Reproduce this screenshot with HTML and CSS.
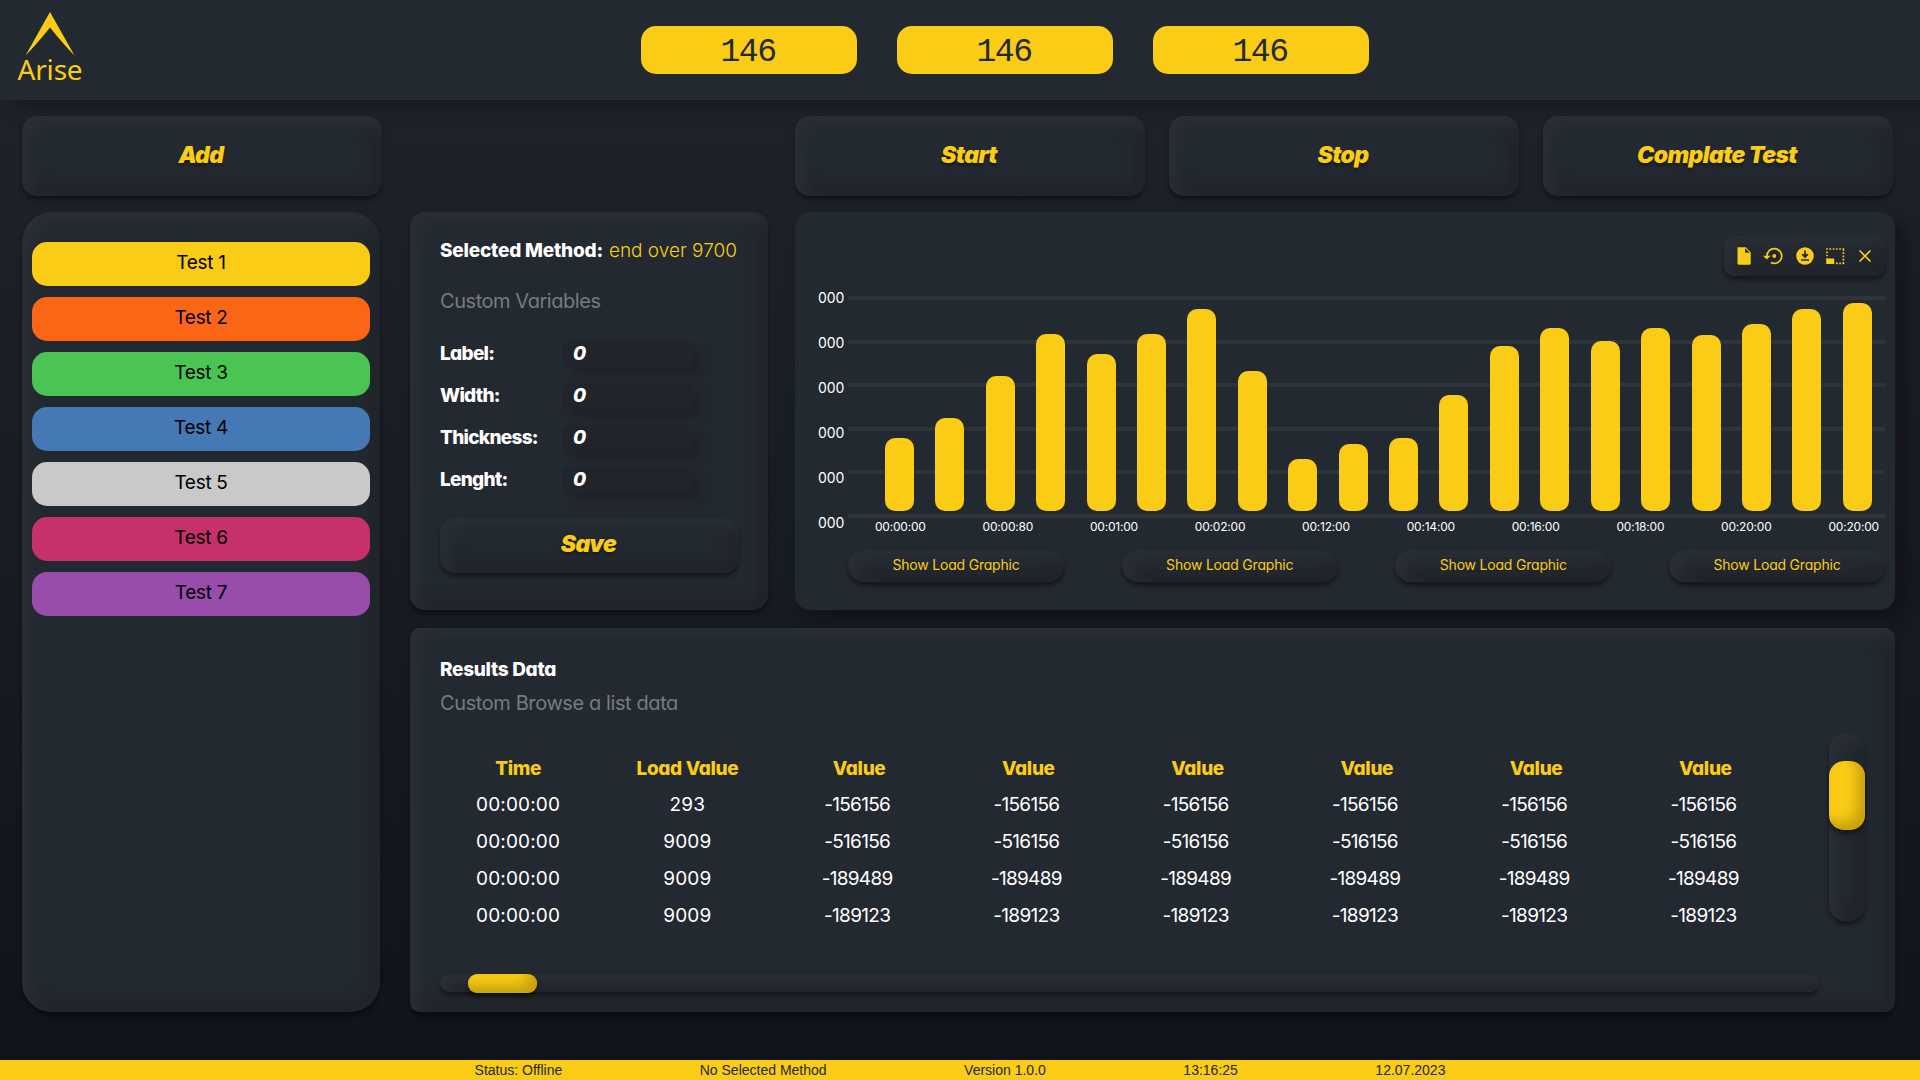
FILE: index.html
```
<!DOCTYPE html>
<html lang="en">
<head>
  <meta charset="UTF-8" />
  <meta name="viewport" content="width=device-width, initial-scale=1.0"/>
  <title>Arise</title>
  <link rel="stylesheet" href="styles.css">
</head>
<body>
  <header>
    <div class="logo">
      <svg width="50" height="44" viewBox="0 0 50 44"><path d="M25 0 L49.500 43.500 Q39 33 25 15.500 Q11 33 .5 43.500 Z" fill="#facc15"/></svg>
      <span>Arise</span>
    </div>
    <div class="counters">
      <div class="counter">146</div>
      <div class="counter">146</div>
      <div class="counter">146</div>
    </div>
  </header>

  <main>
    <button class="btn add">Add</button>
    <div class="controls">
      <button class="btn">Start</button>
      <button class="btn">Stop</button>
      <button class="btn">Complate Test</button>
    </div>

    <aside class="panel sidebar">
      <div class="test yellow">Test 1</div>
      <div class="test orange">Test 2</div>
      <div class="test green">Test 3</div>
      <div class="test blue">Test 4</div>
      <div class="test gray">Test 5</div>
      <div class="test pink">Test 6</div>
      <div class="test purple">Test 7</div>
    </aside>

    <section class="panel method">
      <div class="method-title"><b>Selected Method:</b><span>end over 9700</span></div>
      <div class="method-sub">Custom Variables</div>
      <div class="fields">
        <div class="field"><label>Label:</label><div class="field-value">0</div></div>
        <div class="field"><label>Width:</label><div class="field-value">0</div></div>
        <div class="field"><label>Thickness:</label><div class="field-value">0</div></div>
        <div class="field"><label>Lenght:</label><div class="field-value">0</div></div>
      </div>
      <button class="btn save">Save</button>
    </section>

    <section class="chart-card">
      <div class="toolbar">
        <svg width="24" height="24" viewBox="0 0 24 24"><path d="M5.500 3.300h8.200l5 5v10.900q0 1.600-1.600 1.600H7.100q-1.600 0-1.600-1.600z" fill="#facc15"/><path d="M13.200 4.300v4.500h4.500" fill="#20242a"/></svg>
        <svg width="24" height="24" viewBox="0 0 24 24"><path d="M4.900 12.500a7.400 7.400 0 1 1 4 6.100" fill="none" stroke="#facc15" stroke-width="1.700"/><path d="M1 11.800h7.600l-3.800 3.800z" fill="#facc15"/><circle cx="12.300" cy="12" r="1.900" fill="#facc15"/></svg>
        <svg width="24" height="24" viewBox="0 0 24 24"><circle cx="12" cy="12" r="8.800" fill="#facc15"/><path d="M12 6.500v6M9.200 10.200l2.800 2.800 2.800-2.800M8 16h8" fill="none" stroke="#20242a" stroke-width="1.700"/></svg>
        <svg width="24" height="24" viewBox="0 0 24 24"><path d="M3.200 5h18M20.400 5v14.500M4 7.400v7M13 19.300h8.200" fill="none" stroke="#facc15" stroke-width="1.700" stroke-dasharray="1.700 1.550"/><path d="M3.200 14.500h8v5.500h-8z" fill="#facc15"/></svg>
        <svg width="24" height="24" viewBox="0 0 24 24"><path d="M6.500 6.500l11 11M17.500 6.500l-11 11" fill="none" stroke="#facc15" stroke-width="1.700"/></svg>
      </div>
      <div class="chart">
        <div class="y-labels">
          <span>000</span><span>000</span><span>000</span><span>000</span><span>000</span><span>000</span>
        </div>
        <div class="plot">
          <div class="grid-lines"><i></i><i></i><i></i><i></i><i></i><i></i></div>
          <div class="bars" id="bars"></div>
        </div>
      </div>
      <div class="x-labels">
        <span>00:00:00</span><span>00:00:80</span><span>00:01:00</span><span>00:02:00</span><span>00:12:00</span>
        <span>00:14:00</span><span>00:16:00</span><span>00:18:00</span><span>00:20:00</span><span>00:20:00</span>
      </div>
      <div class="chart-buttons">
        <button class="graphic-btn">Show Load Graphic</button>
        <button class="graphic-btn">Show Load Graphic</button>
        <button class="graphic-btn">Show Load Graphic</button>
        <button class="graphic-btn">Show Load Graphic</button>
      </div>
    </section>

    <section class="panel results">
      <h2>Results Data</h2>
      <p>Custom Browse a list data</p>
      <div class="results-body">
        <table>
          <thead id="resultsHead"></thead>
          <tbody id="resultsBody"></tbody>
        </table>
        <div class="track-y"><div class="thumb-y"></div></div>
      </div>
      <div class="track-x"><div class="thumb-x"></div></div>
    </section>
  </main>

  <footer>
    <span>Status: Offline</span>
    <span>No Selected Method</span>
    <span>Version 1.0.0</span>
    <span>13:16:25</span>
    <span>12.07.2023</span>
  </footer>

  <script>
    const barHeights = [73, 93, 135, 177, 157, 177, 202, 140, 52, 67, 73, 116, 165, 183, 170, 183, 176, 187, 202, 208];

    const rows = [
      ["00:00:00", "293", "-156156"],
      ["00:00:00", "9009", "-516156"],
      ["00:00:00", "9009", "-189489"],
      ["00:00:00", "9009", "-189123"]
    ];

    function loadBars() {
      const bars = document.getElementById("bars");
      barHeights.forEach(h => {
        const bar = document.createElement("div");
        bar.className = "bar";
        bar.style.height = h + "px";
        bars.appendChild(bar);
      });
    }

    function loadResults() {
      const valueCols = 6;
      document.getElementById("resultsHead").innerHTML =
        "<tr><th>Time</th><th>Load Value</th>" + "<th class='value'>Value</th>".repeat(valueCols) + "</tr>";
      document.getElementById("resultsBody").innerHTML = rows.map(r =>
        `<tr><td>${r[0]}</td><td>${r[1]}</td>` + `<td class="value">${r[2]}</td>`.repeat(valueCols) + "</tr>"
      ).join("");
    }

    loadBars();
    loadResults();
  </script>
</body>
</html>
```
FILE: styles.css
```
:root {
  --yellow: #facc15;
  --card: #232930;
  --raised: 0 4px 4px rgba(0, 0, 0, 0.4), inset 8px 8px 16px rgba(48, 51, 60, 0.65), inset -8px -8px 16px rgba(31, 34, 38, 0.7);
}

* {
  box-sizing: border-box;
}

body {
  margin: 0;
  width: 1920px;
  height: 1080px;
  overflow: hidden;
  display: flex;
  flex-direction: column;
  font-family: Inter, sans-serif;
  font-feature-settings: "cv11";
  background: linear-gradient(#20242a, #0f131b);
  color: #fff;
}

button {
  border: none;
  font-family: inherit;
  font-feature-settings: inherit;
  cursor: pointer;
}

header {
  height: 100px;
  flex-shrink: 0;
  display: grid;
  grid-template-columns: 641px auto;
  background: var(--card);
  box-shadow: 15px 6px 14px rgba(20, 23, 26, 0.85);
}

.logo {
  width: 100px;
  display: flex;
  flex-direction: column;
  align-items: center;
  padding-top: 12px;
}

.logo span {
  margin-top: -1px;
  font-family: "Noto Sans", sans-serif;
  font-size: 28px;
  line-height: 28px;
  letter-spacing: -0.2px;
  color: var(--yellow);
}

.counters {
  display: flex;
  gap: 40px;
  padding-top: 26px;
}

.counter {
  width: 216px;
  height: 48px;
  border-radius: 15px;
  background: var(--yellow);
  color: #232930;
  font: 33px/53px "Liberation Mono", monospace;
  letter-spacing: -1.4px;
  padding-right: 2px;
  text-align: center;
}

main {
  flex: 1;
  display: grid;
  grid-template-columns: 358px 358px 1100px;
  grid-template-rows: 80px 398px 386px;
  row-gap: 16px;
  padding: 16px 22px;
}

.btn {
  height: 80px;
  padding: 0 2px 3px 0;
  border-radius: 15px;
  background: var(--card);
  box-shadow: var(--raised);
  color: var(--yellow);
  font-size: 23px;
  font-weight: 900;
  font-style: italic;
  letter-spacing: -0.6px;
  text-shadow: 0 3px 3px rgba(0, 0, 0, 0.3);
}

.add {
  width: 360px;
}

.controls {
  grid-column: 3;
  margin-left: 57px;
  width: 1098px;
  display: flex;
  gap: 24px;
}

.controls .btn {
  flex: 1;
}

.panel {
  background: var(--card);
  border-radius: 15px;
  box-shadow: var(--raised);
}

.sidebar {
  grid-column: 1;
  grid-row: 2 / 4;
  border-radius: 30px;
  padding: 30px 10px;
  display: flex;
  flex-direction: column;
  gap: 11px;
}

.test {
  height: 44px;
  border-radius: 15px;
  color: #000;
  font-size: 19px;
  line-height: 41px;
  letter-spacing: -0.3px;
  text-align: center;
}

.yellow { background: #facc15; }
.orange { background: #fa6615; }
.green { background: #4ac553; }
.blue { background: #4479b6; }
.gray { background: #c9c9c9; }
.pink { background: #c7306d; }
.purple { background: #984cab; }

.method {
  margin-left: 30px;
  width: 358px;
  padding: 27px 29px 0 30px;
  display: flex;
  flex-direction: column;
}

.method-title {
  display: flex;
  justify-content: space-between;
  line-height: 24px;
  font-size: 19px;
  padding-right: 2px;
  white-space: nowrap;
}

.method-title b {
  font-weight: 800;
  letter-spacing: -0.2px;
}

.method-title span {
  color: var(--yellow);
  font-weight: 300;
}

.method-sub {
  margin-top: 26px;
  color: #777b80;
  font-size: 20px;
  line-height: 24px;
  letter-spacing: -0.45px;
}

.fields {
  margin-top: 29px;
  display: grid;
  gap: 17px;
}

.field {
  display: grid;
  grid-template-columns: 123px 129px;
  height: 25px;
  font-size: 19px;
  font-weight: 800;
  line-height: 24px;
  letter-spacing: -0.7px;
}

.field-value {
  padding-left: 10px;
  border-radius: 4px;
  background: #21252b;
  box-shadow: 10px 8px 10px rgba(30, 33, 39, 0.85);
  font-style: italic;
}

.save {
  margin-top: 25px;
  height: 55px;
}

.chart-card {
  margin-left: 57px;
  width: 1100px;
  padding: 24px 10px 0 23px;
  border-radius: 15px;
  background: var(--card);
  box-shadow: 12px 10px 16px rgba(12, 15, 20, 0.55);
  display: flex;
  flex-direction: column;
}

.toolbar {
  align-self: flex-end;
  width: 161px;
  height: 40px;
  display: flex;
  align-items: center;
  justify-content: space-between;
  padding: 0 8px;
  border-radius: 10px;
  background: var(--card);
  box-shadow: var(--raised);
}

.chart {
  display: flex;
  gap: 4px;
  margin-top: 12px;
}

.y-labels {
  width: 26px;
  height: 245px;
  display: flex;
  flex-direction: column;
  justify-content: space-between;
  font-size: 14px;
  line-height: 20px;
  letter-spacing: -0.1px;
}

.plot {
  flex: 1;
  display: grid;
  height: 230px;
  padding-top: 8px;
}

.grid-lines,
.bars {
  grid-area: 1 / 1;
}

.grid-lines {
  height: 222px;
  display: flex;
  flex-direction: column;
  justify-content: space-between;
}

.grid-lines i {
  height: 4px;
  background: #2f343b;
}

.bars {
  height: 215px;
  display: flex;
  align-items: flex-end;
  justify-content: space-between;
  padding: 0 13px 0 37px;
}

.bar {
  width: 29px;
  border-radius: 10px;
  background: var(--yellow);
}

.x-labels {
  display: flex;
  justify-content: space-between;
  margin: -15px 6px 0 57px;
  font-size: 12px;
  line-height: 18px;
  letter-spacing: -0.2px;
}

.chart-buttons {
  display: flex;
  justify-content: space-between;
  margin: 14px 0 0 30px;
}

.graphic-btn {
  width: 216px;
  height: 32px;
  padding: 0 0 4px;
  border-radius: 16px;
  background: var(--card);
  box-shadow: var(--raised);
  color: var(--yellow);
  font-size: 14px;
  letter-spacing: -0.2px;
}

.results {
  grid-column: 2 / 4;
  margin: 2px 0 0 30px;
  width: 1485px;
  padding: 30px 30px 0;
  border-radius: 10px;
}

.results h2 {
  margin: 0;
  font-size: 19px;
  font-weight: 800;
  line-height: 24px;
  letter-spacing: -0.3px;
}

.results p {
  margin: 9px 0 0;
  color: #777b80;
  font-size: 20px;
  line-height: 24px;
  letter-spacing: -0.4px;
}

.results-body {
  display: flex;
  justify-content: space-between;
  height: 258px;
  padding-top: 18px;
}

table {
  width: 1354px;
  height: 185px;
  margin-top: 16px;
  table-layout: fixed;
  border-collapse: collapse;
  text-align: center;
  font-size: 19px;
}

th,
td {
  height: 37px;
  padding: 0 13px 0 0;
}

td {
  letter-spacing: 0.15px;
}

th {
  padding-top: 1px;
  color: var(--yellow);
  font-weight: 800;
  letter-spacing: -0.35px;
}

td.value {
  padding-right: 12px;
  letter-spacing: -0.7px;
}

th.value {
  padding-right: 8px;
}

.track-y {
  width: 36px;
  height: 188px;
  padding-top: 28px;
  border-radius: 16px;
  background: var(--card);
  box-shadow: var(--raised);
}

.thumb-y {
  height: 69px;
  border-radius: 15px;
  background: var(--yellow);
  box-shadow: 0 4px 4px rgba(0, 0, 0, 0.4), inset -8px -8px 12px rgba(150, 120, 10, 0.5);
}

.track-x {
  width: 1379px;
  height: 18px;
  margin-top: 1px;
  padding-left: 28px;
  border-radius: 10px;
  background: var(--card);
  box-shadow: var(--raised);
}

.thumb-x {
  width: 69px;
  height: 19px;
  border-radius: 9px;
  background: var(--yellow);
  box-shadow: 0 4px 4px rgba(0, 0, 0, 0.4), inset -8px -8px 12px rgba(150, 120, 10, 0.5);
}

footer {
  height: 20px;
  display: flex;
  justify-content: center;
  gap: 137.500px;
  background: var(--yellow);
  color: #232930;
  font: 14px/21px "Liberation Sans", Arial, sans-serif;
}
```
